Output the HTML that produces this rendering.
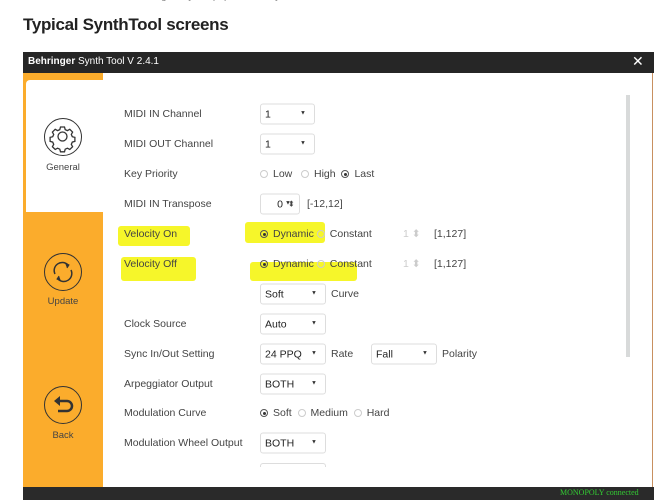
<!DOCTYPE html><html><head><meta charset="utf-8"><style>
*{margin:0;padding:0;box-sizing:border-box}
body{width:672px;height:500px;background:#fff;position:relative;overflow:hidden;font-family:"Liberation Sans",sans-serif;color:#333}
.a{position:absolute}
h1{position:absolute;left:23px;top:15px;font-size:17px;font-weight:bold;color:#222;letter-spacing:-0.3px}
.lab{position:absolute;left:124px;font-size:10.5px;color:#444;transform:translateY(-50%)}
.sel{position:absolute;height:21px;border:1px solid #ddd;border-radius:3px;background:#fff;font-size:10.5px;color:#222;padding:4px 0 0 4px;transform:translateY(-50%)}
.sel:after{content:"▼";position:absolute;right:8px;top:6px;font-size:6px;color:#333}
.t{position:absolute;font-size:10.5px;color:#444;transform:translateY(-50%)}
.r{display:inline-block;width:8px;height:8px;border:1px solid #ccc;border-radius:50%;vertical-align:-1px;margin-right:5px;position:relative}
.r.on{border-color:#555}
.r.on:after{content:"";position:absolute;left:1.5px;top:1.5px;width:3px;height:3px;background:#333;border-radius:50%}
.hl{position:absolute;background:#f6f62a;border-radius:3px}
.ic{position:absolute;left:44px;width:38px;height:38px;border:1.3px solid #333;border-radius:50%}
.il{position:absolute;font-size:9.5px;color:#444;width:80px;text-align:center;left:23px}
</style></head><body>
<div class="a" style="left:150px;top:-9px;font-size:10px;color:#888">engine by the pupils and may</div>
<h1>Typical SynthTool screens</h1>
<div class="a" style="left:23px;top:52px;width:631px;height:21px;background:#262626"></div>
<div class="a" style="left:28px;top:56px;font-size:10px;color:#fff"><b>Behringer</b> Synth Tool V 2.4.1</div>
<div class="a" style="left:632px;top:53px;font-size:14px;color:#fff">✕</div>
<div class="a" style="left:23px;top:73px;width:80px;height:414px;background:#fbac2c"></div>
<div class="a" style="left:26px;top:80px;width:77px;height:132px;background:#fff;border-radius:4px 0 0 0"></div>
<div class="a" style="left:652px;top:73px;width:1px;height:414px;background:#c89060"></div>
<div class="a" style="left:626px;top:95px;width:4px;height:262px;background:#d8dada"></div>
<div class="a" style="left:23px;top:487px;width:631px;height:13px;background:#2a2a2a"></div>
<div class="a" style="left:560px;top:488px;font-size:8px;color:#3c3;font-family:'Liberation Serif',serif">MONOPOLY connected</div>
<div class="ic" style="top:118px"><svg width="36" height="36" viewBox="0 0 36 36"><circle cx="17.5" cy="17.5" r="4.5" fill="none" stroke="#333" stroke-width="1.3"/><path d="M15.5 8h4l.7 2.6 2.2 1 2.4-1.3 2.8 2.8-1.3 2.4 1 2.2 2.6.7v4l-2.6.7-1 2.2 1.3 2.4-2.8 2.8-2.4-1.3-2.2 1-.7 2.6h-4l-.7-2.6-2.2-1-2.4 1.300-2.8-2.8 1.3-2.4-1-2.2-2.6-.7v-4l2.6-.7 1-2.2-1.3-2.4 2.8-2.8 2.4 1.3 2.2-1z" fill="none" stroke="#333" stroke-width="1.3"/></svg></div>
<div class="il" style="top:162px">General</div>
<div class="ic" style="top:253px"><svg width="36" height="36" viewBox="0 0 36 36"><path d="M10 20a8 8 0 0 1 13-9M26 16a8 8 0 0 1-13 9" fill="none" stroke="#333" stroke-width="1.5"/><path d="M20 9l4 2-2 3M16 27l-4-2 2-3" fill="#333" stroke="#333"/></svg></div>
<div class="il" style="top:296px">Update</div>
<div class="ic" style="top:386px"><svg width="36" height="36" viewBox="0 0 36 36"><path d="M12 14h10a5 5 0 0 1 0 10h-9" fill="none" stroke="#333" stroke-width="2.5"/><path d="M9 14l6-5v10z" fill="#333"/></svg></div>
<div class="il" style="top:430px">Back</div>
<div class="hl" style="left:118px;top:226px;width:72px;height:20px"></div>
<div class="hl" style="left:121px;top:257px;width:75px;height:24px"></div>
<div class="hl" style="left:245px;top:222px;width:80px;height:21px"></div>
<div class="hl" style="left:250px;top:262px;width:107px;height:19px"></div>
<div class="lab" style="top:114px">MIDI IN Channel</div><div class="sel" style="left:260px;top:114px;width:55px">1</div>
<div class="lab" style="top:144px">MIDI OUT Channel</div><div class="sel" style="left:260px;top:144px;width:55px">1</div>
<div class="lab" style="top:174px">Key Priority</div><div class="t" style="left:260px;top:174px"><span class="r"></span>Low &nbsp; <span class="r"></span>High &nbsp;<span class="r on"></span>Last</div>
<div class="lab" style="top:204px">MIDI IN Transpose</div><div class="sel" style="left:260px;top:204px;width:40px;text-align:center;padding-left:0">0</div><div class="t" style="left:288px;top:204px;font-size:8px">⬍</div><div class="t" style="left:307px;top:204px">[-12,12]</div>
<div class="lab" style="top:234px">Velocity On</div><div class="t" style="left:260px;top:234px"><span class="r on"></span>Dynamic <span class="r"></span>Constant</div><div class="t" style="left:403px;top:234px;color:#ccc">1 ⬍</div><div class="t" style="left:434px;top:234px">[1,127]</div>
<div class="lab" style="top:264px">Velocity Off</div><div class="t" style="left:260px;top:264px"><span class="r on"></span>Dynamic <span class="r"></span>Constant</div><div class="t" style="left:403px;top:264px;color:#ccc">1 ⬍</div><div class="t" style="left:434px;top:264px">[1,127]</div>
<div class="sel" style="left:260px;top:294px;width:66px">Soft</div><div class="t" style="left:331px;top:294px">Curve</div>
<div class="lab" style="top:324px">Clock Source</div><div class="sel" style="left:260px;top:324px;width:66px">Auto</div>
<div class="lab" style="top:354px">Sync In/Out Setting</div><div class="sel" style="left:260px;top:354px;width:66px">24 PPQ</div><div class="t" style="left:331px;top:354px">Rate</div><div class="sel" style="left:371px;top:354px;width:66px">Fall</div><div class="t" style="left:442px;top:354px">Polarity</div>
<div class="lab" style="top:384px">Arpeggiator Output</div><div class="sel" style="left:260px;top:384px;width:66px">BOTH</div>
<div class="lab" style="top:413px">Modulation Curve</div><div class="t" style="left:260px;top:413px"><span class="r on"></span>Soft &nbsp;<span class="r"></span>Medium &nbsp;<span class="r"></span>Hard</div>
<div class="lab" style="top:443px">Modulation Wheel Output</div><div class="sel" style="left:260px;top:443px;width:66px">BOTH</div>
<div class="a" style="left:260px;top:463px;width:66px;height:4px;border:1px solid #ddd;border-bottom:none;border-radius:3px 3px 0 0"></div>
</body></html>
